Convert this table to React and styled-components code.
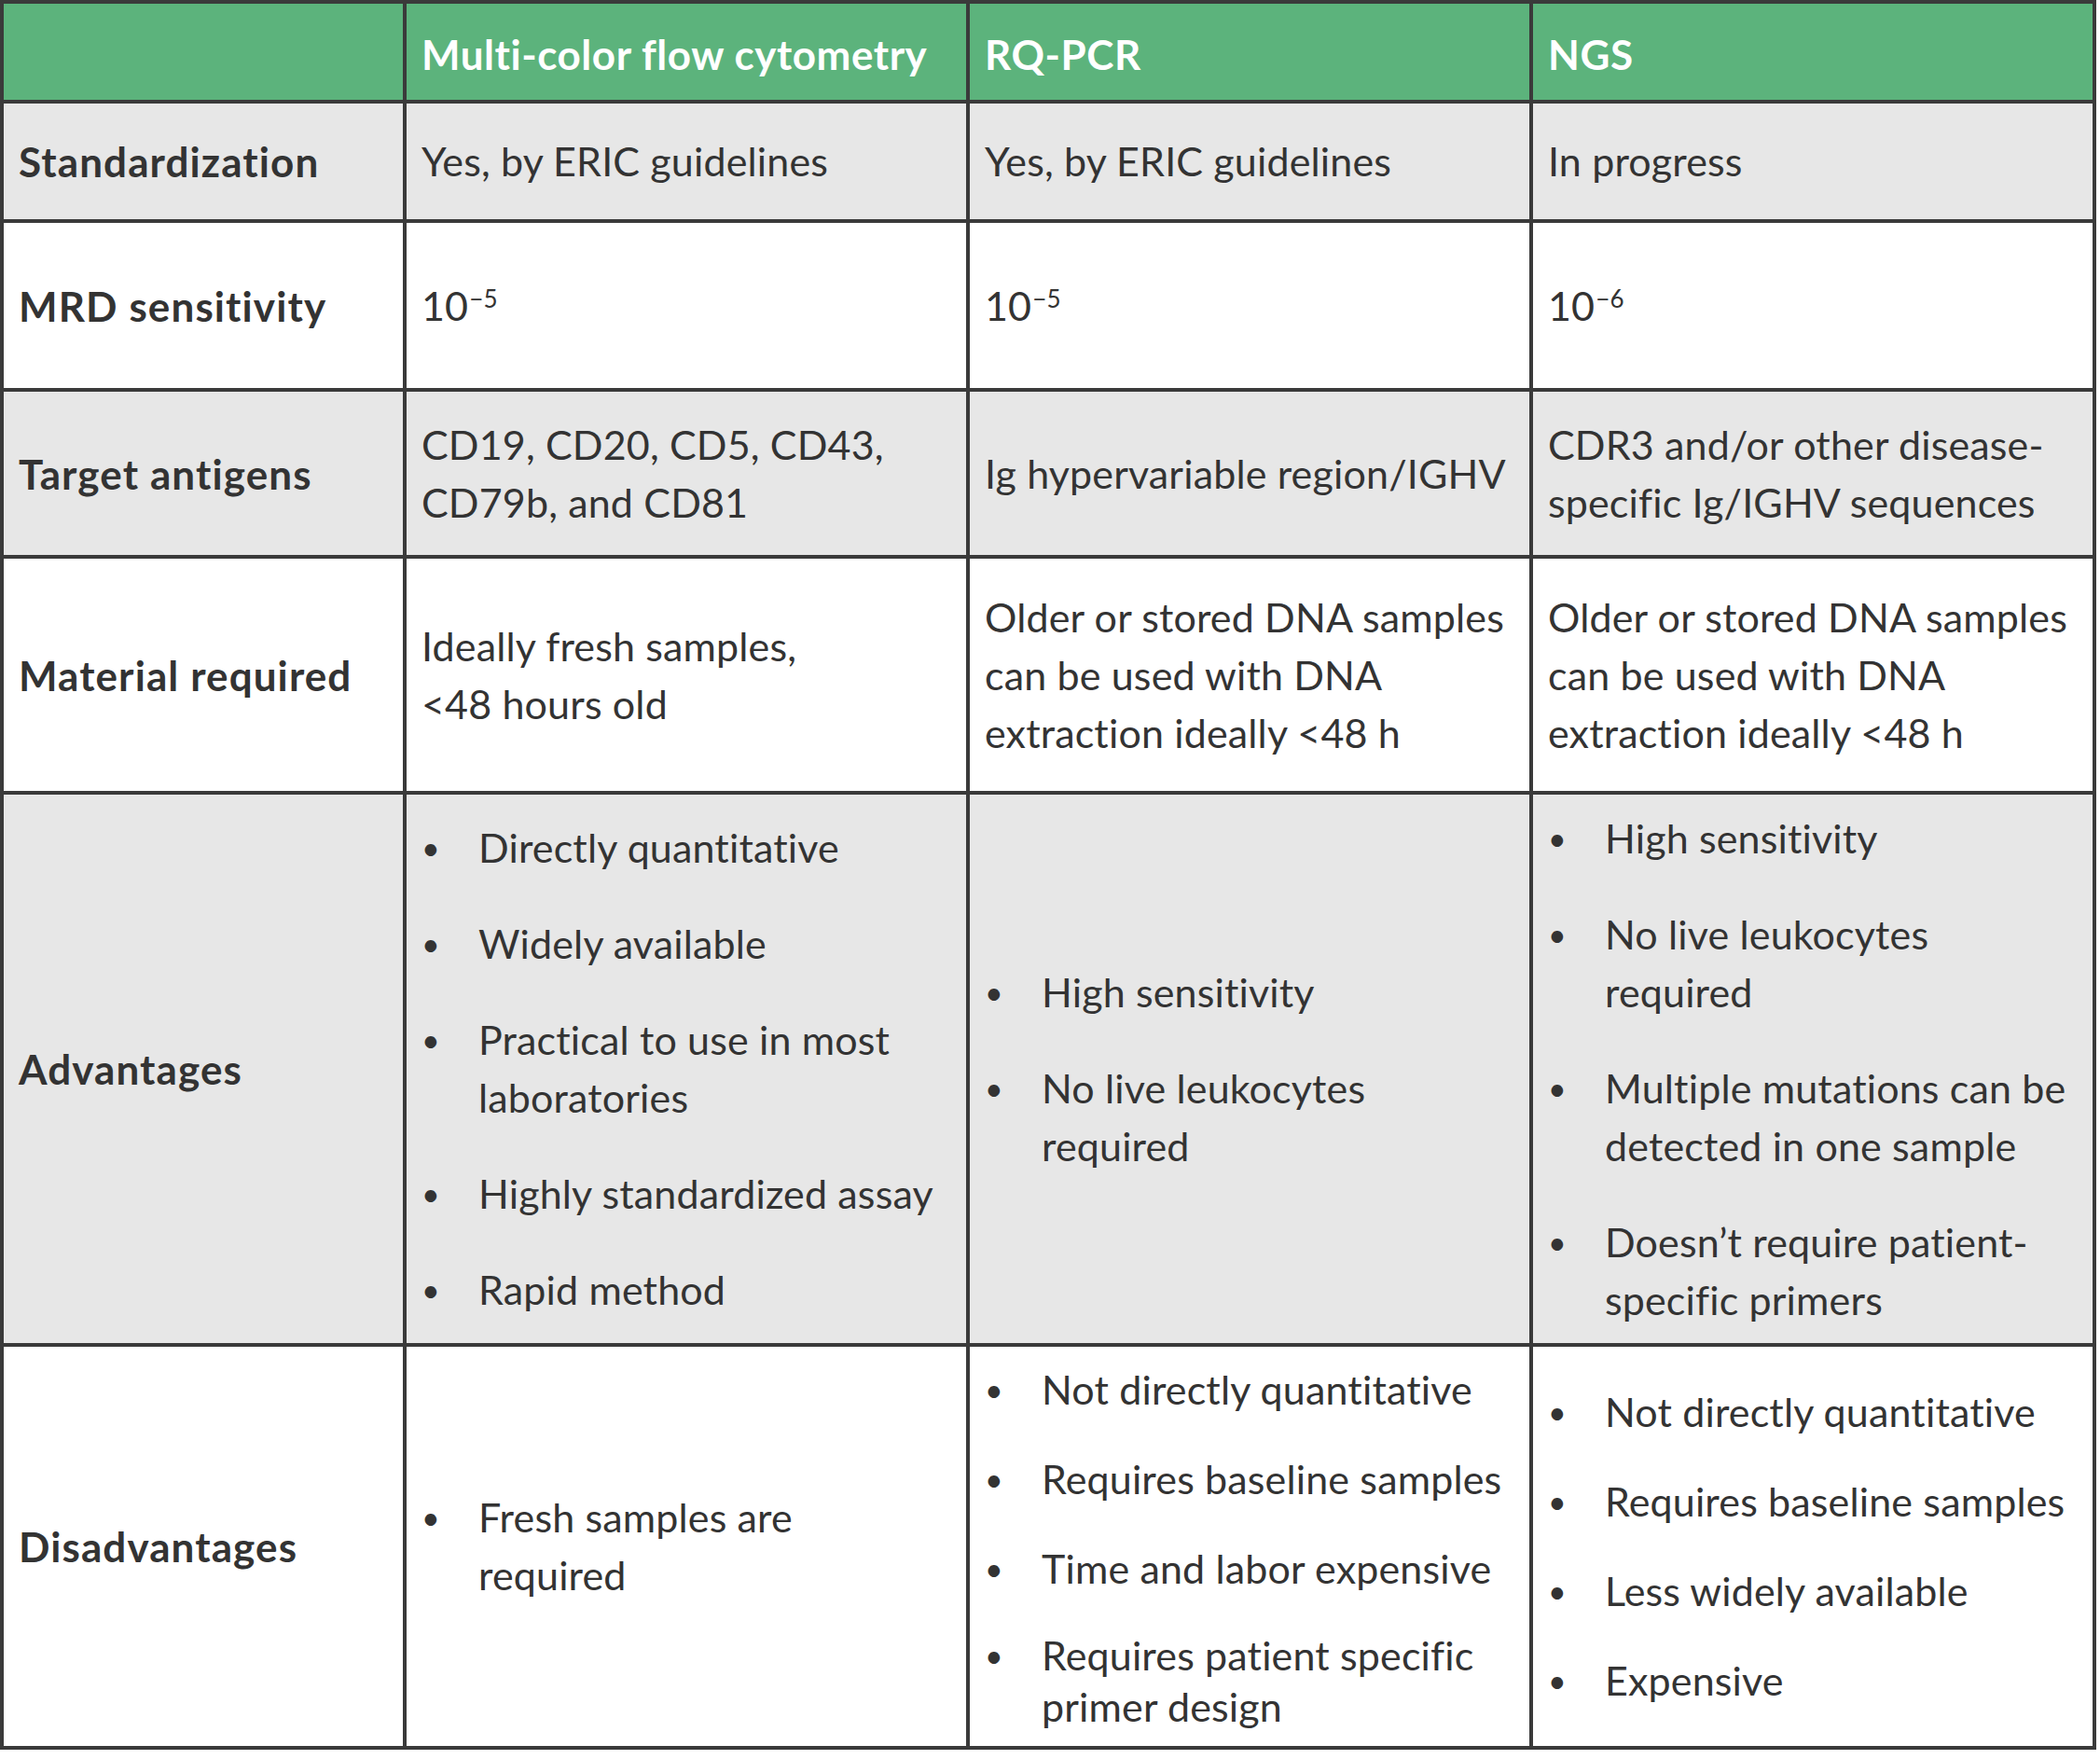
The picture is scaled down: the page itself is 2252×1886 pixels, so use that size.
import React from "react";
import styled, { createGlobalStyle } from "styled-components";

const GlobalStyle = createGlobalStyle`
  html, body {
    margin: 0;
    padding: 0;
    background: #ffffff;
  }
  body {
    font-family: Lato, "Noto Sans", sans-serif;
    color: #333333;
  }
`;

const Table = styled.div`
  display: grid;
  grid-template-columns: 428px 600px 600px 600px;
  grid-template-rows: 103px 124px 177px 175px 249px 588px 428px;
  gap: 4px;
  padding: 4px;
  width: max-content;
  background: #3a3a3a;
`;

const Cell = styled.div`
  display: flex;
  align-items: center;
  padding: ${(p) => (p.$head ? "4px 16px 0" : "0 16px")};
  background: ${(p) => p.$bg};
  color: ${(p) => (p.$head ? "#ffffff" : "#333333")};
  font-weight: ${(p) => (p.$bold ? 700 : 400)};
  font-size: ${(p) => (p.$bold ? 44 : 43)}px;
  letter-spacing: ${(p) => (p.$head ? 0.55 : p.$bold ? 1.1 : 0.15)}px;
  line-height: 62px;
  white-space: nowrap;
  overflow: hidden;
`;

const Lines = styled.div`
  display: flex;
  flex-direction: column;
`;

const Sup = styled.sup`
  font-size: 26px;
  line-height: 0;
  vertical-align: 14px;
  margin-left: 1px;
`;

const List = styled.ul`
  list-style: none;
  margin: 0;
  padding: 0;
  display: flex;
  flex-direction: column;
  gap: ${(p) => p.$gap}px;
`;

const Item = styled.li`
  display: grid;
  grid-template-columns: 61px auto;
  line-height: ${(p) => p.$lh || 62}px;
`;

const Dot = styled.span`
  font-size: 34px;
  line-height: inherit;
`;

const COLORS = {
  head: "#5cb37c",
  grey: "#e7e7e7",
  white: "#ffffff",
};

const text = (value) => {
  if (Array.isArray(value)) {
    return (
      <Lines>
        {value.map((line) => (
          <span key={line}>{line}</span>
        ))}
      </Lines>
    );
  }
  return value;
};

const power = (exp) => (
  <span>
    10<Sup>{exp}</Sup>
  </span>
);

const Bullets = ({ items, gap, tight }) => (
  <List $gap={gap}>
    {items.map((it) => (
      <Item key={[].concat(it).join(" ")} $lh={tight && Array.isArray(it) ? 55 : 62}>
        <Dot>•</Dot>
        {text(it)}
      </Item>
    ))}
  </List>
);

const header = ["", "Multi-color flow cytometry", "RQ-PCR", "NGS"];

const rows = [
  {
    label: "Standardization",
    bg: COLORS.grey,
    cells: ["Yes, by ERIC guidelines", "Yes, by ERIC guidelines", "In progress"],
  },
  {
    label: "MRD sensitivity",
    bg: COLORS.white,
    cells: [power("−5"), power("−5"), power("−6")],
  },
  {
    label: "Target antigens",
    bg: COLORS.grey,
    cells: [
      text(["CD19, CD20, CD5, CD43,", "CD79b, and CD81"]),
      "Ig hypervariable region/IGHV",
      text(["CDR3 and/or other disease-", "specific Ig/IGHV sequences"]),
    ],
  },
  {
    label: "Material required",
    bg: COLORS.white,
    cells: [
      text(["Ideally fresh samples,", "<48 hours old"]),
      text(["Older or stored DNA samples", "can be used with DNA", "extraction ideally <48 h"]),
      text(["Older or stored DNA samples", "can be used with DNA", "extraction ideally <48 h"]),
    ],
  },
  {
    label: "Advantages",
    bg: COLORS.grey,
    cells: [
      <Bullets
        gap={41}
        items={[
          "Directly quantitative",
          "Widely available",
          ["Practical to use in most", "laboratories"],
          "Highly standardized assay",
          "Rapid method",
        ]}
      />,
      <Bullets gap={41} items={["High sensitivity", ["No live leukocytes", "required"]]} />,
      <Bullets
        gap={41}
        items={[
          "High sensitivity",
          ["No live leukocytes", "required"],
          ["Multiple mutations can be", "detected in one sample"],
          ["Doesn’t require patient-", "specific primers"],
        ]}
      />,
    ],
  },
  {
    label: "Disadvantages",
    bg: COLORS.white,
    cells: [
      <Bullets gap={34} items={[["Fresh samples are", "required"]]} />,
      <Bullets
        gap={34}
        tight
        items={[
          "Not directly quantitative",
          "Requires baseline samples",
          "Time and labor expensive",
          ["Requires patient specific", "primer design"],
        ]}
      />,
      <Bullets
        gap={34}
        items={[
          "Not directly quantitative",
          "Requires baseline samples",
          "Less widely available",
          "Expensive",
        ]}
      />,
    ],
  },
];

export default function App() {
  return (
    <>
      <GlobalStyle />
      <Table>
        {header.map((h, i) => (
          <Cell key={`h${i}`} $bg={COLORS.head} $head $bold>
            {h}
          </Cell>
        ))}
        {rows.map((row) => (
          <React.Fragment key={row.label}>
            <Cell $bg={row.bg} $bold>
              {row.label}
            </Cell>
            {row.cells.map((c, i) => (
              <Cell key={`${row.label}${i}`} $bg={row.bg}>
                {c}
              </Cell>
            ))}
          </React.Fragment>
        ))}
      </Table>
    </>
  );
}
